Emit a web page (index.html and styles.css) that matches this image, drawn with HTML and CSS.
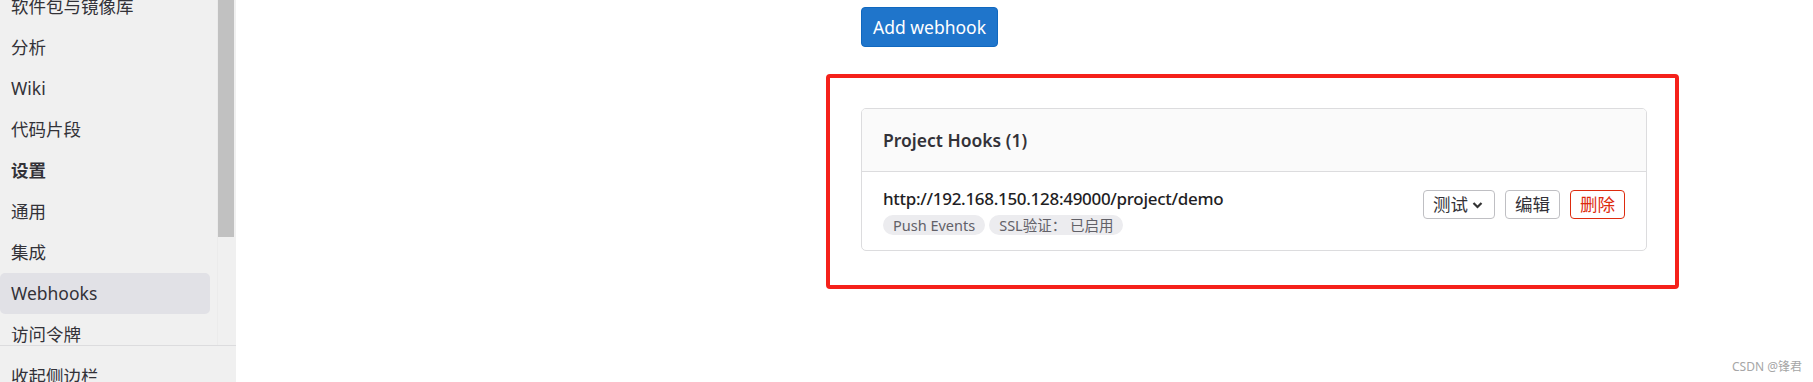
FILE: index.html
```html
<!DOCTYPE html>
<html lang="zh-CN">
<head>
    <meta charset="UTF-8">
    <meta name="viewport" content="width=device-width, initial-scale=1.0">
    <title>Webhooks</title>
    <link rel="stylesheet" href="styles.css">
</head>
<body>
    <aside class="sidebar">
        <div class="sidebar-scroll">
            <ul class="nav-list">
                <li class="nav-item">软件包与镜像库</li>
                <li class="nav-item">分析</li>
                <li class="nav-item">Wiki</li>
                <li class="nav-item">代码片段</li>
                <li class="nav-item nav-section">设置</li>
                <li class="nav-item">通用</li>
                <li class="nav-item">集成</li>
                <li class="nav-item active">Webhooks</li>
                <li class="nav-item">访问令牌</li>
            </ul>
            <div class="scroll-track">
                <div class="scroll-thumb"></div>
            </div>
        </div>
        <div class="sidebar-footer">收起侧边栏</div>
    </aside>

    <main class="main">
        <div class="spacer"></div>
        <div class="content">
            <button class="btn-primary">Add webhook</button>

            <!-- red annotation frame around the hooks list -->
            <div class="highlight">
                <div class="card">
                    <div class="card-header">Project Hooks (1)</div>
                    <div class="hook-row">
                        <div class="hook-info">
                            <div class="hook-url">http://192.168.150.128:49000/project/demo</div>
                            <div class="badges">
                                <span class="badge">Push Events</span>
                                <span class="badge">SSL验证： 已启用</span>
                            </div>
                        </div>
                        <div class="hook-actions">
                            <button class="btn">测试<svg class="chevron" width="11" height="8" viewBox="0 0 11 8"><path d="M1.5 2 L5.5 6 L9.5 2" fill="none" stroke="#333" stroke-width="2.2"/></svg></button>
                            <button class="btn">编辑</button>
                            <button class="btn btn-danger">删除</button>
                        </div>
                    </div>
                </div>
            </div>
        </div>
    </main>

    <div class="watermark">CSDN @锋君</div>
</body>
</html>
```

FILE: styles.css
```css
* {
    margin: 0;
    padding: 0;
    box-sizing: border-box;
}
body {
    font-family: "Noto Sans", "Noto Sans CJK SC", sans-serif;
    font-size: 17.5px;
    color: #333238;
    background: #fff;
    display: flex;
    height: 382px;
    overflow: hidden;
}
/* Sidebar */
.sidebar {
    width: 236px;
    flex-shrink: 0;
    background: #f0f0f0;
    display: flex;
    flex-direction: column;
    height: 100%;
}
.sidebar-scroll {
    flex: 1;
    display: flex;
    overflow: hidden;
    padding-right: 2px;
}
.nav-list {
    list-style: none;
    width: 217px;
    margin-top: -14px;
}
.nav-item {
    height: 41px;
    line-height: 41px;
    padding-left: 11px;
    margin-right: 7px;
    color: #333238;
    white-space: nowrap;
}
.nav-section {
    font-weight: 700;
}
.nav-item.active {
    background: #e1e1e6;
    border-radius: 5px;
}
.scroll-track {
    width: 17px;
    background: #f0f0f0;
    border-left: 1px solid #ebebeb;
}
.scroll-thumb {
    height: 237px;
    background: #c1c1c1;
}
.sidebar-footer {
    height: 37px;
    border-top: 1px solid #dcdcde;
    padding: 18px 0 0 11px;
    line-height: 24px;
    white-space: nowrap;
}
/* Main */
.main {
    flex: 1;
    display: grid;
    grid-template-columns: 625px 786px 1fr;
    padding-top: 7px;
}
.content {
    grid-column: 2;
}
.btn-primary {
    height: 40px;
    padding: 0 11px;
    background: #1f75cb;
    border: 1px solid #1068bf;
    border-radius: 4px;
    color: #fff;
    font-family: inherit;
    font-size: 17.5px;
}
.highlight {
    margin: 27px -32px 0 -35px;
    padding: 30px 28px 34px 31px;
    border: 4px solid #f5211a;
    border-radius: 4px;
}
.card {
    border: 1px solid #dcdcde;
    border-radius: 5px;
    overflow: hidden;
}
.card-header {
    background: #fafafa;
    border-bottom: 1px solid #dcdcde;
    padding: 19px 21px;
    line-height: 24px;
    font-weight: 600;
}
.hook-row {
    display: flex;
    justify-content: space-between;
    align-items: flex-start;
    padding: 15px 21px 15px 21px;
}
.hook-url {
    font-weight: 500;
    font-size: 17px;
    letter-spacing: -0.3px;
    line-height: 24px;
    color: #1f1e24;
}
.badges {
    display: flex;
    gap: 4px;
    margin-top: 4px;
}
.badge {
    background: #ececef;
    color: #626168;
    font-size: 14.5px;
    line-height: 20px;
    height: 20px;
    padding: 0 10px;
    border-radius: 10px;
}
.hook-actions {
    display: flex;
    gap: 10px;
    margin-top: 3px;
}
.btn {
    height: 29px;
    padding: 0 9px;
    border: 1px solid #bfbfc3;
    border-radius: 4px;
    background: #fff;
    color: #333238;
    font-family: inherit;
    font-size: 17.5px;
    line-height: 27px;
    display: flex;
    align-items: center;
}
.chevron {
    margin-left: 4px;
    margin-right: 2px;
}
.btn-danger {
    border-color: #dd2b0e;
    color: #dd2b0e;
}
.watermark {
    position: absolute;
    right: 11px;
    bottom: 7px;
    font-size: 12px;
    color: #a6a6a6;
}
```
